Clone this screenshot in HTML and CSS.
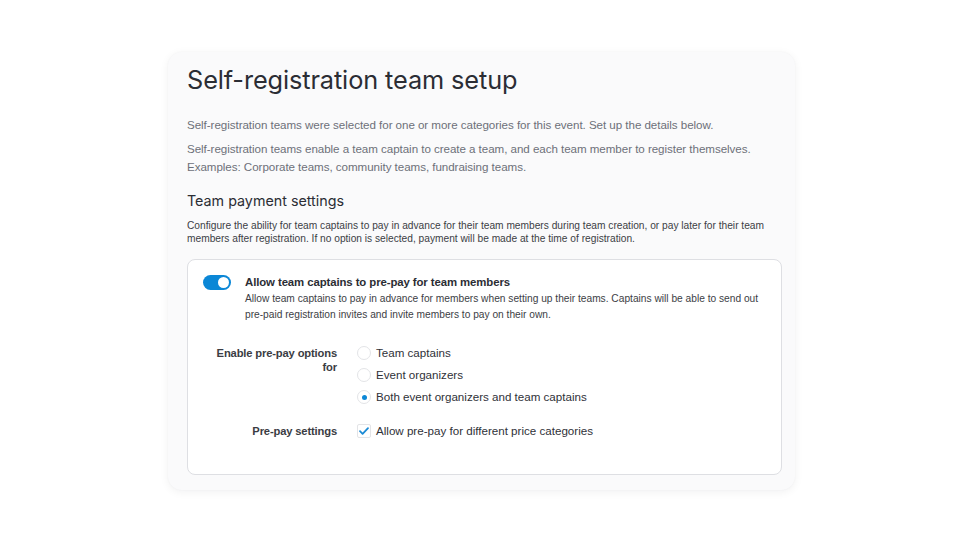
FILE: index.html
```html
<!DOCTYPE html>
<html lang="en">
<head>
<meta charset="utf-8">
<title>Self-registration team setup</title>
<link rel="stylesheet" href="styles.css">
</head>
<body>
<main class="page">
  <section class="card">
    <h1 class="title">Self-registration team setup</h1>
    <p class="lead">Self-registration teams were selected for one or more categories for this event. Set up the details below.</p>
    <p class="lead">Self-registration teams enable a team captain to create a team, and each team member to register themselves.<br>Examples: Corporate teams, community teams, fundraising teams.</p>

    <h2 class="section-title">Team payment settings</h2>
    <p class="section-desc">Configure the ability for team captains to pay in advance for their team members during team creation, or pay later for their team members after registration. If no option is selected, payment will be made at the time of registration.</p>

    <div class="panel">
      <div class="toggle-row">
        <span class="toggle" role="switch" aria-checked="true"><span class="knob"></span></span>
        <div class="toggle-text">
          <div class="toggle-title">Allow team captains to pre-pay for team members</div>
          <p class="toggle-desc">Allow team captains to pay in advance for members when setting up their teams. Captains will be able to send out<br>pre-paid registration invites and invite members to pay on their own.</p>
        </div>
      </div>

      <div class="field">
        <div class="field-label">Enable pre-pay options<br>for</div>
        <div class="options">
          <label class="option"><span class="radio"></span>Team captains</label>
          <label class="option"><span class="radio"></span>Event organizers</label>
          <label class="option"><span class="radio checked"></span>Both event organizers and team captains</label>
        </div>
      </div>

      <div class="field field-last">
        <div class="field-label">Pre-pay settings</div>
        <div class="options">
          <label class="option">
            <span class="checkbox">
              <svg viewBox="0 0 14 14" width="14" height="14"><path d="M3 7.2l2.6 2.6L11 4.2" fill="none" stroke="#1b8bd6" stroke-width="1.8" stroke-linecap="round" stroke-linejoin="round"/></svg>
            </span>Allow pre-pay for different price categories
          </label>
        </div>
      </div>
    </div>
  </section>
</main>
</body>
</html>
```

FILE: styles.css
```css
* { box-sizing: border-box; }

html, body {
  margin: 0;
  background: #ffffff;
}

body {
  font-family: "Liberation Sans", Arial, sans-serif;
  color: #2f3138;
}

.page {
  width: 960px;
  height: 540px;
  padding-top: 52px;
  padding-left: 168px;
}

.card {
  width: 627px;
  height: 438px;
  background: #fafafb;
  border-radius: 14px;
  box-shadow: 0 2px 10px rgba(20, 24, 40, 0.06), 0 0 2px rgba(20, 24, 40, 0.04);
  padding: 13px 13px 0 19px;
}

.title {
  margin: 0;
  font-family: Inter, "Liberation Sans", sans-serif;
  font-weight: 400;
  font-size: 25.3px;
  line-height: 30px;
  letter-spacing: -0.1px;
  color: #2b2d34;
}

.lead {
  margin: 0;
  font-size: 11.6px;
  line-height: 18px;
  color: #6d7079;
  letter-spacing: -0.05px;
}

.title + .lead { margin-top: 21px; }
.lead + .lead { margin-top: 6px; }

.section-title {
  margin: 15px 0 0;
  font-family: Inter, "Liberation Sans", sans-serif;
  font-weight: 400;
  font-size: 14.3px;
  line-height: 20px;
  color: #2b2d34;
}

.section-desc {
  margin: 8px 0 0;
  font-size: 10.2px;
  line-height: 13px;
  color: #3c3e45;
  width: 590px;
}

.panel {
  margin-top: 14px;
  width: 595px;
  height: 216px;
  background: #ffffff;
  border: 1px solid #dedfe3;
  border-radius: 8px;
  padding: 15px 20px 0 15px;
}

.toggle-row {
  display: flex;
  gap: 14px;
}

.toggle {
  flex: none;
  position: relative;
  width: 28px;
  height: 15px;
  border-radius: 8px;
  background: #0b87d6;
}

.knob {
  position: absolute;
  right: 2px;
  top: 2px;
  width: 11px;
  height: 11px;
  border-radius: 50%;
  background: #ffffff;
}

.toggle-title {
  font-size: 11.4px;
  line-height: 14px;
  font-weight: 700;
  color: #2b2d34;
  letter-spacing: -0.1px;
}

.toggle-desc {
  margin: 2px 0 0;
  font-size: 10.2px;
  line-height: 16px;
  color: #3c3e45;
  white-space: nowrap;
}

.field {
  display: flex;
  margin-top: 23px;
}

.field-last { margin-top: 20px; }

.field-label {
  width: 134px;
  flex: none;
  text-align: right;
  font-size: 11.2px;
  line-height: 14px;
  font-weight: 700;
  color: #3a3c43;
  letter-spacing: -0.15px;
}

.options {
  display: flex;
  flex-direction: column;
  gap: 8px;
  margin-left: 20px;
}

.option {
  display: flex;
  align-items: center;
  gap: 5px;
  font-size: 11.6px;
  line-height: 14px;
  color: #2f3138;
}

.radio {
  position: relative;
  width: 14px;
  height: 14px;
  border-radius: 50%;
  border: 1px solid #e3e4e7;
  background: #ffffff;
}

.radio.checked::after {
  content: "";
  position: absolute;
  left: 3.5px;
  top: 3.5px;
  width: 5px;
  height: 5px;
  border-radius: 50%;
  background: #0b87d6;
}

.checkbox {
  width: 14px;
  height: 14px;
  border-radius: 2px;
  border: 1px solid #e3e4e7;
  display: flex;
  align-items: center;
  justify-content: center;
}

.checkbox svg { display: block; margin: -1px; }
```
